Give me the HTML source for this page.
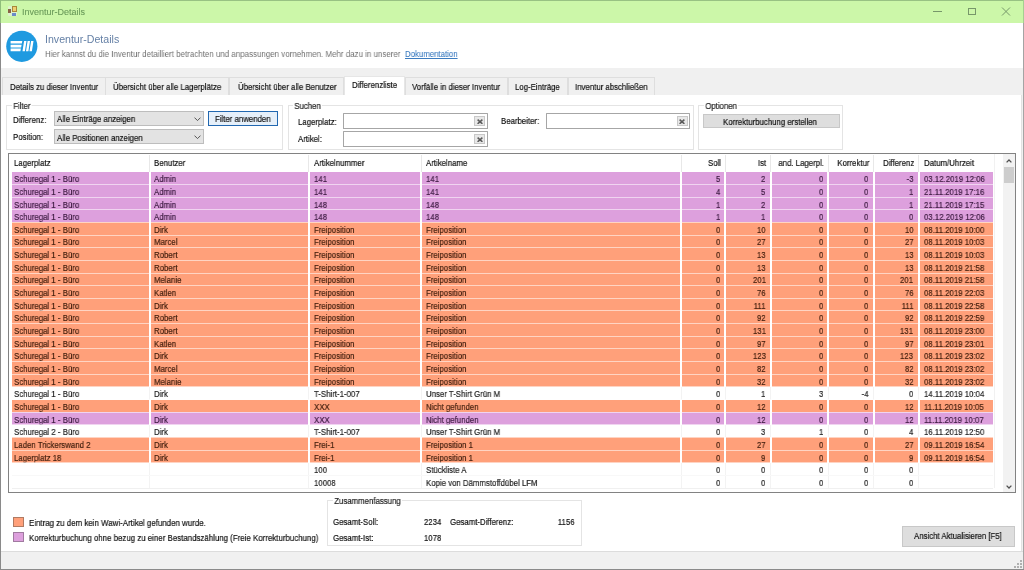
<!DOCTYPE html>
<html><head><meta charset="utf-8"><style>
*{margin:0;padding:0;box-sizing:border-box}
html,body{width:1024px;height:570px;overflow:hidden;background:#f0f0f0;font-family:"Liberation Sans", sans-serif;font-size:7.8px;color:#111;position:relative}
div{position:absolute}
.t{will-change:transform;-webkit-text-stroke:0.2px currentColor;white-space:nowrap;line-height:9px;font-size:9.6px;transform:scaleX(0.815);transform-origin:0 0}
.r{text-align:right;transform-origin:100% 0}
.cell{}
.hsep{top:155px;width:1px;height:16.5px;background:#e8e8e8}
.rsep{left:12px;width:982px;height:1px;background:rgba(255,255,255,0.55);z-index:1}
.vsep{width:2px;background:#fff}
.wsep{top:171.8px;height:316px;width:1px;background:#f3f3f3}
.gb{border:1px solid #e4e4e4}
.gbl{-webkit-text-stroke:0.2px #222;background:#fff;padding:0 1.5px;top:-5px;left:4.5px;white-space:nowrap;line-height:10px;color:#222;font-size:9.6px;transform:scaleX(0.815);transform-origin:0 0;will-change:transform}
.combo{background:#e3e3e3;border:1px solid #bdbdbd}
.tb{background:#fff;border:1.5px solid #a6a6a6;border-radius:0.5px}
.xb{background:#e8e8e8;border:1px solid #c8c8c8;width:11px;height:9.5px}
.btn{background:#dedede;border:1px solid #c8c8c8}
.tab{top:77px;height:18.8px;background:#f0f0f0;border:1px solid #dedede;border-bottom:none}
#wrap{left:0;top:0;width:1024px;height:570px;filter:blur(0.45px)}
</style></head><body><div id="wrap">
<!-- window frame -->
<div style="left:0;top:0;width:1024px;height:22.5px;background:#ccf7a9"></div>
<div style="left:0;top:0;width:1024px;height:1px;background:#98c283"></div>
<div style="left:0;top:0;width:1px;height:22.5px;background:#8fbd7b"></div>
<div style="left:1023px;top:0;width:1px;height:22.5px;background:#a5cf90"></div>
<!-- app icon -->
<div style="left:7.5px;top:6px;width:9.5px;height:10px;background:#dcf3cc;border-radius:1px"></div>
<div style="left:8px;top:8.8px;width:3.3px;height:4.6px;background:#8a6446"></div>
<div style="left:11.9px;top:6.4px;width:4.9px;height:5.3px;background:#f0d072;border:1px solid #a8883a"></div>
<div style="left:11.9px;top:13px;width:4.3px;height:2.8px;background:#6a8cc8"></div>
<div class="t" style="left:22.2px;top:7px;font-size:9px;line-height:10px;color:#6a9a5a;transform:none;-webkit-text-stroke:0.1px #6a9a5a">Inventur-Details</div>
<!-- caption buttons -->
<div style="left:933px;top:11px;width:9px;height:1px;background:#77976a"></div>
<div style="left:968px;top:7.5px;width:8px;height:7.5px;border:1px solid #77976a"></div>
<svg style="position:absolute;left:1001px;top:7px" width="10" height="9" viewBox="0 0 10 9"><path d="M1 0.5 L9 8.5 M9 0.5 L1 8.5" stroke="#77976a" stroke-width="1" fill="none"/></svg>

<!-- body frame borders -->
<div style="left:0;top:22.5px;width:1px;height:548px;background:#8a8a8a"></div>
<div style="left:1023px;top:22.5px;width:1px;height:548px;background:#a4a4a4"></div>
<div style="left:0;top:569px;width:1024px;height:1px;background:#8a8a8a"></div>

<!-- header white -->
<div style="left:1px;top:22.5px;width:1022px;height:45.5px;background:#fff"></div>
<svg style="position:absolute;left:0;top:0" width="50" height="70" viewBox="0 0 50 70">
<circle cx="21.8" cy="46.3" r="15.6" fill="#1f9ae0"/>
<path d="M10.6 40.9 H22.3 L21.8 43.6 H10.6 Z M10.6 44.7 H21.6 L21.1 47.4 H10.6 Z M10.6 48.5 H20.9 L20.4 51.2 H10.6 Z" fill="#fff"/>
<path d="M24.1 40.9 H26.5 L24.9 51.2 H22.5 Z M27.6 40.9 H30.0 L28.4 51.2 H26.0 Z M31.1 40.9 H33.5 L31.9 51.2 H29.5 Z" fill="#fff"/>
</svg>
<div class="t" style="left:45.2px;top:32.6px;font-size:10.6px;line-height:12px;color:#6580a6;transform:none;-webkit-text-stroke:0">Inventur-Details</div>
<div class="t" style="left:45.2px;top:48.6px;color:#707070;-webkit-text-stroke:0;transform:scaleX(0.828)">Hier kannst du die Inventur detailliert betrachten und anpassungen vornehmen. Mehr dazu in unserer</div>
<div class="t" style="left:404.6px;top:48.6px;color:#3c7cc0;-webkit-text-stroke:0.1px #3c7cc0;text-decoration:underline">Dokumentation</div>

<!-- tabs -->
<div class="tab" style="left:1.8px;width:103.8px"></div>
<div class="tab" style="left:105.4px;width:123.6px"></div>
<div class="tab" style="left:229px;width:115px"></div>
<div class="tab" style="left:405.2px;width:102.4px"></div>
<div class="tab" style="left:507.6px;width:60.5px"></div>
<div class="tab" style="left:568.1px;width:87px"></div>
<div style="left:343.7px;top:75.8px;width:61.5px;height:20.5px;background:#fff;border:1px solid #e6e6e6;border-bottom:none"></div>
<div class="t" style="left:10px;top:82.0px">Details zu dieser Inventur</div>
<div class="t" style="left:113.4px;top:82.0px">Übersicht über alle Lagerplätze</div>
<div class="t" style="left:238px;top:82.0px">Übersicht über alle Benutzer</div>
<div class="t" style="left:351.9px;top:80.2px">Differenzliste</div>
<div class="t" style="left:411.6px;top:82.0px">Vorfälle in dieser Inventur</div>
<div class="t" style="left:515.4px;top:82.0px">Log-Einträge</div>
<div class="t" style="left:575.4px;top:82.0px">Inventur abschließen</div>

<!-- tab page -->
<div style="left:1px;top:95.4px;width:1021px;height:456.5px;background:#fff;border:1px solid #e2e2e2;border-top:none;border-left:none"></div>

<!-- Filter group -->
<div class="gb" style="left:6.2px;top:105.3px;width:276.4px;height:44.5px"><div class="gbl">Filter</div></div>
<div class="t" style="left:12.7px;top:114.5px">Differenz:</div>
<div class="t" style="left:12.7px;top:132.2px">Position:</div>
<div class="combo" style="left:53.7px;top:110.6px;width:150.5px;height:15.3px"></div>
<div class="combo" style="left:53.7px;top:129.2px;width:150.5px;height:15.2px"></div>
<div class="t" style="left:57.1px;top:113.8px">Alle Einträge anzeigen</div>
<div class="t" style="left:57.1px;top:132.8px">Alle Positionen anzeigen</div>
<svg style="position:absolute;left:194.2px;top:116.5px" width="7" height="4.5" viewBox="0 0 7 4.5"><path d="M0.5 0.6 L3.5 3.6 L6.5 0.6" stroke="#555" stroke-width="1" fill="none"/></svg>
<svg style="position:absolute;left:194.2px;top:135px" width="7" height="4.5" viewBox="0 0 7 4.5"><path d="M0.5 0.6 L3.5 3.6 L6.5 0.6" stroke="#555" stroke-width="1" fill="none"/></svg>
<div style="left:207.9px;top:110.5px;width:70px;height:15.3px;background:#e6f0fa;border:1.5px solid #2167b0"></div>
<div class="t" style="left:214.6px;top:113.7px">Filter anwenden</div>

<!-- Suchen group -->
<div class="gb" style="left:287.6px;top:105.3px;width:406px;height:44.5px"><div class="gbl">Suchen</div></div>
<div class="t" style="left:297.6px;top:116.5px">Lagerplatz:</div>
<div class="t" style="left:297.6px;top:134px">Artikel:</div>
<div class="t" style="left:501px;top:116px">Bearbeiter:</div>
<div class="tb" style="left:343.3px;top:113px;width:145px;height:15.6px"></div>
<div class="tb" style="left:343.3px;top:131px;width:145px;height:15.7px"></div>
<div class="tb" style="left:546.1px;top:113px;width:143.7px;height:15.6px"></div>
<div class="xb" style="left:474.3px;top:116.4px"></div><svg style="position:absolute;left:476.90000000000003px;top:118.60000000000001px" width="6" height="5.5" viewBox="0 0 6 5.5"><path d="M0.6 0.6 L5.4 4.9 M5.4 0.6 L0.6 4.9" stroke="#5a5a5a" stroke-width="1.5" fill="none"/></svg><div class="xb" style="left:474.3px;top:134.3px"></div><svg style="position:absolute;left:476.90000000000003px;top:136.5px" width="6" height="5.5" viewBox="0 0 6 5.5"><path d="M0.6 0.6 L5.4 4.9 M5.4 0.6 L0.6 4.9" stroke="#5a5a5a" stroke-width="1.5" fill="none"/></svg><div class="xb" style="left:676.8px;top:116.4px"></div><svg style="position:absolute;left:679.4px;top:118.60000000000001px" width="6" height="5.5" viewBox="0 0 6 5.5"><path d="M0.6 0.6 L5.4 4.9 M5.4 0.6 L0.6 4.9" stroke="#5a5a5a" stroke-width="1.5" fill="none"/></svg>

<!-- Optionen group -->
<div class="gb" style="left:698.3px;top:105.3px;width:145px;height:44.5px"><div class="gbl">Optionen</div></div>
<div class="btn" style="left:703.3px;top:113.5px;width:136.4px;height:14.9px"></div>
<div class="t" style="left:723px;top:117px">Korrekturbuchung erstellen</div>

<!-- Grid -->
<div style="left:8px;top:153.4px;width:1008px;height:339.4px;background:#fff;border:1px solid #828282"></div>
<div class="wsep" style="left:149.0px"></div><div class="wsep" style="left:308.2px"></div><div class="wsep" style="left:420.5px"></div><div class="wsep" style="left:680.6px"></div><div class="wsep" style="left:724.9px"></div><div class="wsep" style="left:770.4px"></div><div class="wsep" style="left:827.9px"></div><div class="wsep" style="left:873.3px"></div><div class="wsep" style="left:918.2px"></div><div style="left:994px;top:154.4px;width:1px;height:334px;background:#f1f1f1"></div><div class="t" style="left:13.80px;top:158.20px">Lagerplatz</div><div class="t" style="left:154.40px;top:158.20px">Benutzer</div><div class="t" style="left:313.60px;top:158.20px">Artikelnummer</div><div class="t" style="left:425.90px;top:158.20px">Artikelname</div><div class="t r" style="right:303.40px;top:158.20px">Soll</div><div class="t r" style="right:257.90px;top:158.20px">Ist</div><div class="t r" style="right:200.40px;top:158.20px">and. Lagerpl.</div><div class="t r" style="right:155.00px;top:158.20px">Korrektur</div><div class="t r" style="right:110.10px;top:158.20px">Differenz</div><div class="t" style="left:923.60px;top:158.20px">Datum/Uhrzeit</div><div class="hsep" style="left:149.0px"></div><div class="hsep" style="left:308.2px"></div><div class="hsep" style="left:420.5px"></div><div class="hsep" style="left:680.6px"></div><div class="hsep" style="left:724.9px"></div><div class="hsep" style="left:770.4px"></div><div class="hsep" style="left:827.9px"></div><div class="hsep" style="left:873.3px"></div><div class="hsep" style="left:918.2px"></div><div style="left:12px;top:171.80px;width:980.8px;height:12.65px;background:#dda0dd"></div><div class="vsep" style="left:148.5px;top:171.80px;height:12.65px"></div><div class="vsep" style="left:307.7px;top:171.80px;height:12.65px"></div><div class="vsep" style="left:420.0px;top:171.80px;height:12.65px"></div><div class="vsep" style="left:680.1px;top:171.80px;height:12.65px"></div><div class="vsep" style="left:724.4px;top:171.80px;height:12.65px"></div><div class="vsep" style="left:769.9px;top:171.80px;height:12.65px"></div><div class="vsep" style="left:827.4px;top:171.80px;height:12.65px"></div><div class="vsep" style="left:872.8px;top:171.80px;height:12.65px"></div><div class="vsep" style="left:917.7px;top:171.80px;height:12.65px"></div><div class="t" style="left:13.80px;top:174.20px;color:#3c1a40">Schuregal 1 - Büro</div><div class="t" style="left:154.40px;top:174.20px;color:#3c1a40">Admin</div><div class="t" style="left:313.60px;top:174.20px;color:#3c1a40">141</div><div class="t" style="left:425.90px;top:174.20px;color:#3c1a40">141</div><div class="t r" style="right:303.90px;top:174.20px;color:#3c1a40">5</div><div class="t r" style="right:258.40px;top:174.20px;color:#3c1a40">2</div><div class="t r" style="right:200.90px;top:174.20px;color:#3c1a40">0</div><div class="t r" style="right:155.50px;top:174.20px;color:#3c1a40">0</div><div class="t r" style="right:110.60px;top:174.20px;color:#3c1a40">-3</div><div class="t" style="left:923.60px;top:174.20px;color:#3c1a40">03.12.2019 12:06</div><div style="left:12px;top:184.45px;width:980.8px;height:12.65px;background:#dda0dd"></div><div class="vsep" style="left:148.5px;top:184.45px;height:12.65px"></div><div class="vsep" style="left:307.7px;top:184.45px;height:12.65px"></div><div class="vsep" style="left:420.0px;top:184.45px;height:12.65px"></div><div class="vsep" style="left:680.1px;top:184.45px;height:12.65px"></div><div class="vsep" style="left:724.4px;top:184.45px;height:12.65px"></div><div class="vsep" style="left:769.9px;top:184.45px;height:12.65px"></div><div class="vsep" style="left:827.4px;top:184.45px;height:12.65px"></div><div class="vsep" style="left:872.8px;top:184.45px;height:12.65px"></div><div class="vsep" style="left:917.7px;top:184.45px;height:12.65px"></div><div class="rsep" style="top:183.95px"></div><div class="t" style="left:13.80px;top:186.85px;color:#3c1a40">Schuregal 1 - Büro</div><div class="t" style="left:154.40px;top:186.85px;color:#3c1a40">Admin</div><div class="t" style="left:313.60px;top:186.85px;color:#3c1a40">141</div><div class="t" style="left:425.90px;top:186.85px;color:#3c1a40">141</div><div class="t r" style="right:303.90px;top:186.85px;color:#3c1a40">4</div><div class="t r" style="right:258.40px;top:186.85px;color:#3c1a40">5</div><div class="t r" style="right:200.90px;top:186.85px;color:#3c1a40">0</div><div class="t r" style="right:155.50px;top:186.85px;color:#3c1a40">0</div><div class="t r" style="right:110.60px;top:186.85px;color:#3c1a40">1</div><div class="t" style="left:923.60px;top:186.85px;color:#3c1a40">21.11.2019 17:16</div><div style="left:12px;top:197.10px;width:980.8px;height:12.65px;background:#dda0dd"></div><div class="vsep" style="left:148.5px;top:197.10px;height:12.65px"></div><div class="vsep" style="left:307.7px;top:197.10px;height:12.65px"></div><div class="vsep" style="left:420.0px;top:197.10px;height:12.65px"></div><div class="vsep" style="left:680.1px;top:197.10px;height:12.65px"></div><div class="vsep" style="left:724.4px;top:197.10px;height:12.65px"></div><div class="vsep" style="left:769.9px;top:197.10px;height:12.65px"></div><div class="vsep" style="left:827.4px;top:197.10px;height:12.65px"></div><div class="vsep" style="left:872.8px;top:197.10px;height:12.65px"></div><div class="vsep" style="left:917.7px;top:197.10px;height:12.65px"></div><div class="rsep" style="top:196.60px"></div><div class="t" style="left:13.80px;top:199.50px;color:#3c1a40">Schuregal 1 - Büro</div><div class="t" style="left:154.40px;top:199.50px;color:#3c1a40">Admin</div><div class="t" style="left:313.60px;top:199.50px;color:#3c1a40">148</div><div class="t" style="left:425.90px;top:199.50px;color:#3c1a40">148</div><div class="t r" style="right:303.90px;top:199.50px;color:#3c1a40">1</div><div class="t r" style="right:258.40px;top:199.50px;color:#3c1a40">2</div><div class="t r" style="right:200.90px;top:199.50px;color:#3c1a40">0</div><div class="t r" style="right:155.50px;top:199.50px;color:#3c1a40">0</div><div class="t r" style="right:110.60px;top:199.50px;color:#3c1a40">1</div><div class="t" style="left:923.60px;top:199.50px;color:#3c1a40">21.11.2019 17:15</div><div style="left:12px;top:209.75px;width:980.8px;height:12.65px;background:#dda0dd"></div><div class="vsep" style="left:148.5px;top:209.75px;height:12.65px"></div><div class="vsep" style="left:307.7px;top:209.75px;height:12.65px"></div><div class="vsep" style="left:420.0px;top:209.75px;height:12.65px"></div><div class="vsep" style="left:680.1px;top:209.75px;height:12.65px"></div><div class="vsep" style="left:724.4px;top:209.75px;height:12.65px"></div><div class="vsep" style="left:769.9px;top:209.75px;height:12.65px"></div><div class="vsep" style="left:827.4px;top:209.75px;height:12.65px"></div><div class="vsep" style="left:872.8px;top:209.75px;height:12.65px"></div><div class="vsep" style="left:917.7px;top:209.75px;height:12.65px"></div><div class="rsep" style="top:209.25px"></div><div class="t" style="left:13.80px;top:212.15px;color:#3c1a40">Schuregal 1 - Büro</div><div class="t" style="left:154.40px;top:212.15px;color:#3c1a40">Admin</div><div class="t" style="left:313.60px;top:212.15px;color:#3c1a40">148</div><div class="t" style="left:425.90px;top:212.15px;color:#3c1a40">148</div><div class="t r" style="right:303.90px;top:212.15px;color:#3c1a40">1</div><div class="t r" style="right:258.40px;top:212.15px;color:#3c1a40">1</div><div class="t r" style="right:200.90px;top:212.15px;color:#3c1a40">0</div><div class="t r" style="right:155.50px;top:212.15px;color:#3c1a40">0</div><div class="t r" style="right:110.60px;top:212.15px;color:#3c1a40">0</div><div class="t" style="left:923.60px;top:212.15px;color:#3c1a40">03.12.2019 12:06</div><div style="left:12px;top:222.40px;width:980.8px;height:12.65px;background:#ffa07a"></div><div class="vsep" style="left:148.5px;top:222.40px;height:12.65px"></div><div class="vsep" style="left:307.7px;top:222.40px;height:12.65px"></div><div class="vsep" style="left:420.0px;top:222.40px;height:12.65px"></div><div class="vsep" style="left:680.1px;top:222.40px;height:12.65px"></div><div class="vsep" style="left:724.4px;top:222.40px;height:12.65px"></div><div class="vsep" style="left:769.9px;top:222.40px;height:12.65px"></div><div class="vsep" style="left:827.4px;top:222.40px;height:12.65px"></div><div class="vsep" style="left:872.8px;top:222.40px;height:12.65px"></div><div class="vsep" style="left:917.7px;top:222.40px;height:12.65px"></div><div class="rsep" style="top:221.90px"></div><div class="t" style="left:13.80px;top:224.80px;color:#44200f">Schuregal 1 - Büro</div><div class="t" style="left:154.40px;top:224.80px;color:#44200f">Dirk</div><div class="t" style="left:313.60px;top:224.80px;color:#44200f">Freiposition</div><div class="t" style="left:425.90px;top:224.80px;color:#44200f">Freiposition</div><div class="t r" style="right:303.90px;top:224.80px;color:#44200f">0</div><div class="t r" style="right:258.40px;top:224.80px;color:#44200f">10</div><div class="t r" style="right:200.90px;top:224.80px;color:#44200f">0</div><div class="t r" style="right:155.50px;top:224.80px;color:#44200f">0</div><div class="t r" style="right:110.60px;top:224.80px;color:#44200f">10</div><div class="t" style="left:923.60px;top:224.80px;color:#44200f">08.11.2019 10:00</div><div style="left:12px;top:235.05px;width:980.8px;height:12.65px;background:#ffa07a"></div><div class="vsep" style="left:148.5px;top:235.05px;height:12.65px"></div><div class="vsep" style="left:307.7px;top:235.05px;height:12.65px"></div><div class="vsep" style="left:420.0px;top:235.05px;height:12.65px"></div><div class="vsep" style="left:680.1px;top:235.05px;height:12.65px"></div><div class="vsep" style="left:724.4px;top:235.05px;height:12.65px"></div><div class="vsep" style="left:769.9px;top:235.05px;height:12.65px"></div><div class="vsep" style="left:827.4px;top:235.05px;height:12.65px"></div><div class="vsep" style="left:872.8px;top:235.05px;height:12.65px"></div><div class="vsep" style="left:917.7px;top:235.05px;height:12.65px"></div><div class="rsep" style="top:234.55px"></div><div class="t" style="left:13.80px;top:237.45px;color:#44200f">Schuregal 1 - Büro</div><div class="t" style="left:154.40px;top:237.45px;color:#44200f">Marcel</div><div class="t" style="left:313.60px;top:237.45px;color:#44200f">Freiposition</div><div class="t" style="left:425.90px;top:237.45px;color:#44200f">Freiposition</div><div class="t r" style="right:303.90px;top:237.45px;color:#44200f">0</div><div class="t r" style="right:258.40px;top:237.45px;color:#44200f">27</div><div class="t r" style="right:200.90px;top:237.45px;color:#44200f">0</div><div class="t r" style="right:155.50px;top:237.45px;color:#44200f">0</div><div class="t r" style="right:110.60px;top:237.45px;color:#44200f">27</div><div class="t" style="left:923.60px;top:237.45px;color:#44200f">08.11.2019 10:03</div><div style="left:12px;top:247.70px;width:980.8px;height:12.65px;background:#ffa07a"></div><div class="vsep" style="left:148.5px;top:247.70px;height:12.65px"></div><div class="vsep" style="left:307.7px;top:247.70px;height:12.65px"></div><div class="vsep" style="left:420.0px;top:247.70px;height:12.65px"></div><div class="vsep" style="left:680.1px;top:247.70px;height:12.65px"></div><div class="vsep" style="left:724.4px;top:247.70px;height:12.65px"></div><div class="vsep" style="left:769.9px;top:247.70px;height:12.65px"></div><div class="vsep" style="left:827.4px;top:247.70px;height:12.65px"></div><div class="vsep" style="left:872.8px;top:247.70px;height:12.65px"></div><div class="vsep" style="left:917.7px;top:247.70px;height:12.65px"></div><div class="rsep" style="top:247.20px"></div><div class="t" style="left:13.80px;top:250.10px;color:#44200f">Schuregal 1 - Büro</div><div class="t" style="left:154.40px;top:250.10px;color:#44200f">Robert</div><div class="t" style="left:313.60px;top:250.10px;color:#44200f">Freiposition</div><div class="t" style="left:425.90px;top:250.10px;color:#44200f">Freiposition</div><div class="t r" style="right:303.90px;top:250.10px;color:#44200f">0</div><div class="t r" style="right:258.40px;top:250.10px;color:#44200f">13</div><div class="t r" style="right:200.90px;top:250.10px;color:#44200f">0</div><div class="t r" style="right:155.50px;top:250.10px;color:#44200f">0</div><div class="t r" style="right:110.60px;top:250.10px;color:#44200f">13</div><div class="t" style="left:923.60px;top:250.10px;color:#44200f">08.11.2019 10:03</div><div style="left:12px;top:260.35px;width:980.8px;height:12.65px;background:#ffa07a"></div><div class="vsep" style="left:148.5px;top:260.35px;height:12.65px"></div><div class="vsep" style="left:307.7px;top:260.35px;height:12.65px"></div><div class="vsep" style="left:420.0px;top:260.35px;height:12.65px"></div><div class="vsep" style="left:680.1px;top:260.35px;height:12.65px"></div><div class="vsep" style="left:724.4px;top:260.35px;height:12.65px"></div><div class="vsep" style="left:769.9px;top:260.35px;height:12.65px"></div><div class="vsep" style="left:827.4px;top:260.35px;height:12.65px"></div><div class="vsep" style="left:872.8px;top:260.35px;height:12.65px"></div><div class="vsep" style="left:917.7px;top:260.35px;height:12.65px"></div><div class="rsep" style="top:259.85px"></div><div class="t" style="left:13.80px;top:262.75px;color:#44200f">Schuregal 1 - Büro</div><div class="t" style="left:154.40px;top:262.75px;color:#44200f">Robert</div><div class="t" style="left:313.60px;top:262.75px;color:#44200f">Freiposition</div><div class="t" style="left:425.90px;top:262.75px;color:#44200f">Freiposition</div><div class="t r" style="right:303.90px;top:262.75px;color:#44200f">0</div><div class="t r" style="right:258.40px;top:262.75px;color:#44200f">13</div><div class="t r" style="right:200.90px;top:262.75px;color:#44200f">0</div><div class="t r" style="right:155.50px;top:262.75px;color:#44200f">0</div><div class="t r" style="right:110.60px;top:262.75px;color:#44200f">13</div><div class="t" style="left:923.60px;top:262.75px;color:#44200f">08.11.2019 21:58</div><div style="left:12px;top:273.00px;width:980.8px;height:12.65px;background:#ffa07a"></div><div class="vsep" style="left:148.5px;top:273.00px;height:12.65px"></div><div class="vsep" style="left:307.7px;top:273.00px;height:12.65px"></div><div class="vsep" style="left:420.0px;top:273.00px;height:12.65px"></div><div class="vsep" style="left:680.1px;top:273.00px;height:12.65px"></div><div class="vsep" style="left:724.4px;top:273.00px;height:12.65px"></div><div class="vsep" style="left:769.9px;top:273.00px;height:12.65px"></div><div class="vsep" style="left:827.4px;top:273.00px;height:12.65px"></div><div class="vsep" style="left:872.8px;top:273.00px;height:12.65px"></div><div class="vsep" style="left:917.7px;top:273.00px;height:12.65px"></div><div class="rsep" style="top:272.50px"></div><div class="t" style="left:13.80px;top:275.40px;color:#44200f">Schuregal 1 - Büro</div><div class="t" style="left:154.40px;top:275.40px;color:#44200f">Melanie</div><div class="t" style="left:313.60px;top:275.40px;color:#44200f">Freiposition</div><div class="t" style="left:425.90px;top:275.40px;color:#44200f">Freiposition</div><div class="t r" style="right:303.90px;top:275.40px;color:#44200f">0</div><div class="t r" style="right:258.40px;top:275.40px;color:#44200f">201</div><div class="t r" style="right:200.90px;top:275.40px;color:#44200f">0</div><div class="t r" style="right:155.50px;top:275.40px;color:#44200f">0</div><div class="t r" style="right:110.60px;top:275.40px;color:#44200f">201</div><div class="t" style="left:923.60px;top:275.40px;color:#44200f">08.11.2019 21:58</div><div style="left:12px;top:285.65px;width:980.8px;height:12.65px;background:#ffa07a"></div><div class="vsep" style="left:148.5px;top:285.65px;height:12.65px"></div><div class="vsep" style="left:307.7px;top:285.65px;height:12.65px"></div><div class="vsep" style="left:420.0px;top:285.65px;height:12.65px"></div><div class="vsep" style="left:680.1px;top:285.65px;height:12.65px"></div><div class="vsep" style="left:724.4px;top:285.65px;height:12.65px"></div><div class="vsep" style="left:769.9px;top:285.65px;height:12.65px"></div><div class="vsep" style="left:827.4px;top:285.65px;height:12.65px"></div><div class="vsep" style="left:872.8px;top:285.65px;height:12.65px"></div><div class="vsep" style="left:917.7px;top:285.65px;height:12.65px"></div><div class="rsep" style="top:285.15px"></div><div class="t" style="left:13.80px;top:288.05px;color:#44200f">Schuregal 1 - Büro</div><div class="t" style="left:154.40px;top:288.05px;color:#44200f">Katlen</div><div class="t" style="left:313.60px;top:288.05px;color:#44200f">Freiposition</div><div class="t" style="left:425.90px;top:288.05px;color:#44200f">Freiposition</div><div class="t r" style="right:303.90px;top:288.05px;color:#44200f">0</div><div class="t r" style="right:258.40px;top:288.05px;color:#44200f">76</div><div class="t r" style="right:200.90px;top:288.05px;color:#44200f">0</div><div class="t r" style="right:155.50px;top:288.05px;color:#44200f">0</div><div class="t r" style="right:110.60px;top:288.05px;color:#44200f">76</div><div class="t" style="left:923.60px;top:288.05px;color:#44200f">08.11.2019 22:03</div><div style="left:12px;top:298.30px;width:980.8px;height:12.65px;background:#ffa07a"></div><div class="vsep" style="left:148.5px;top:298.30px;height:12.65px"></div><div class="vsep" style="left:307.7px;top:298.30px;height:12.65px"></div><div class="vsep" style="left:420.0px;top:298.30px;height:12.65px"></div><div class="vsep" style="left:680.1px;top:298.30px;height:12.65px"></div><div class="vsep" style="left:724.4px;top:298.30px;height:12.65px"></div><div class="vsep" style="left:769.9px;top:298.30px;height:12.65px"></div><div class="vsep" style="left:827.4px;top:298.30px;height:12.65px"></div><div class="vsep" style="left:872.8px;top:298.30px;height:12.65px"></div><div class="vsep" style="left:917.7px;top:298.30px;height:12.65px"></div><div class="rsep" style="top:297.80px"></div><div class="t" style="left:13.80px;top:300.70px;color:#44200f">Schuregal 1 - Büro</div><div class="t" style="left:154.40px;top:300.70px;color:#44200f">Dirk</div><div class="t" style="left:313.60px;top:300.70px;color:#44200f">Freiposition</div><div class="t" style="left:425.90px;top:300.70px;color:#44200f">Freiposition</div><div class="t r" style="right:303.90px;top:300.70px;color:#44200f">0</div><div class="t r" style="right:258.40px;top:300.70px;color:#44200f">111</div><div class="t r" style="right:200.90px;top:300.70px;color:#44200f">0</div><div class="t r" style="right:155.50px;top:300.70px;color:#44200f">0</div><div class="t r" style="right:110.60px;top:300.70px;color:#44200f">111</div><div class="t" style="left:923.60px;top:300.70px;color:#44200f">08.11.2019 22:58</div><div style="left:12px;top:310.95px;width:980.8px;height:12.65px;background:#ffa07a"></div><div class="vsep" style="left:148.5px;top:310.95px;height:12.65px"></div><div class="vsep" style="left:307.7px;top:310.95px;height:12.65px"></div><div class="vsep" style="left:420.0px;top:310.95px;height:12.65px"></div><div class="vsep" style="left:680.1px;top:310.95px;height:12.65px"></div><div class="vsep" style="left:724.4px;top:310.95px;height:12.65px"></div><div class="vsep" style="left:769.9px;top:310.95px;height:12.65px"></div><div class="vsep" style="left:827.4px;top:310.95px;height:12.65px"></div><div class="vsep" style="left:872.8px;top:310.95px;height:12.65px"></div><div class="vsep" style="left:917.7px;top:310.95px;height:12.65px"></div><div class="rsep" style="top:310.45px"></div><div class="t" style="left:13.80px;top:313.35px;color:#44200f">Schuregal 1 - Büro</div><div class="t" style="left:154.40px;top:313.35px;color:#44200f">Robert</div><div class="t" style="left:313.60px;top:313.35px;color:#44200f">Freiposition</div><div class="t" style="left:425.90px;top:313.35px;color:#44200f">Freiposition</div><div class="t r" style="right:303.90px;top:313.35px;color:#44200f">0</div><div class="t r" style="right:258.40px;top:313.35px;color:#44200f">92</div><div class="t r" style="right:200.90px;top:313.35px;color:#44200f">0</div><div class="t r" style="right:155.50px;top:313.35px;color:#44200f">0</div><div class="t r" style="right:110.60px;top:313.35px;color:#44200f">92</div><div class="t" style="left:923.60px;top:313.35px;color:#44200f">08.11.2019 22:59</div><div style="left:12px;top:323.60px;width:980.8px;height:12.65px;background:#ffa07a"></div><div class="vsep" style="left:148.5px;top:323.60px;height:12.65px"></div><div class="vsep" style="left:307.7px;top:323.60px;height:12.65px"></div><div class="vsep" style="left:420.0px;top:323.60px;height:12.65px"></div><div class="vsep" style="left:680.1px;top:323.60px;height:12.65px"></div><div class="vsep" style="left:724.4px;top:323.60px;height:12.65px"></div><div class="vsep" style="left:769.9px;top:323.60px;height:12.65px"></div><div class="vsep" style="left:827.4px;top:323.60px;height:12.65px"></div><div class="vsep" style="left:872.8px;top:323.60px;height:12.65px"></div><div class="vsep" style="left:917.7px;top:323.60px;height:12.65px"></div><div class="rsep" style="top:323.10px"></div><div class="t" style="left:13.80px;top:326.00px;color:#44200f">Schuregal 1 - Büro</div><div class="t" style="left:154.40px;top:326.00px;color:#44200f">Robert</div><div class="t" style="left:313.60px;top:326.00px;color:#44200f">Freiposition</div><div class="t" style="left:425.90px;top:326.00px;color:#44200f">Freiposition</div><div class="t r" style="right:303.90px;top:326.00px;color:#44200f">0</div><div class="t r" style="right:258.40px;top:326.00px;color:#44200f">131</div><div class="t r" style="right:200.90px;top:326.00px;color:#44200f">0</div><div class="t r" style="right:155.50px;top:326.00px;color:#44200f">0</div><div class="t r" style="right:110.60px;top:326.00px;color:#44200f">131</div><div class="t" style="left:923.60px;top:326.00px;color:#44200f">08.11.2019 23:00</div><div style="left:12px;top:336.25px;width:980.8px;height:12.65px;background:#ffa07a"></div><div class="vsep" style="left:148.5px;top:336.25px;height:12.65px"></div><div class="vsep" style="left:307.7px;top:336.25px;height:12.65px"></div><div class="vsep" style="left:420.0px;top:336.25px;height:12.65px"></div><div class="vsep" style="left:680.1px;top:336.25px;height:12.65px"></div><div class="vsep" style="left:724.4px;top:336.25px;height:12.65px"></div><div class="vsep" style="left:769.9px;top:336.25px;height:12.65px"></div><div class="vsep" style="left:827.4px;top:336.25px;height:12.65px"></div><div class="vsep" style="left:872.8px;top:336.25px;height:12.65px"></div><div class="vsep" style="left:917.7px;top:336.25px;height:12.65px"></div><div class="rsep" style="top:335.75px"></div><div class="t" style="left:13.80px;top:338.65px;color:#44200f">Schuregal 1 - Büro</div><div class="t" style="left:154.40px;top:338.65px;color:#44200f">Katlen</div><div class="t" style="left:313.60px;top:338.65px;color:#44200f">Freiposition</div><div class="t" style="left:425.90px;top:338.65px;color:#44200f">Freiposition</div><div class="t r" style="right:303.90px;top:338.65px;color:#44200f">0</div><div class="t r" style="right:258.40px;top:338.65px;color:#44200f">97</div><div class="t r" style="right:200.90px;top:338.65px;color:#44200f">0</div><div class="t r" style="right:155.50px;top:338.65px;color:#44200f">0</div><div class="t r" style="right:110.60px;top:338.65px;color:#44200f">97</div><div class="t" style="left:923.60px;top:338.65px;color:#44200f">08.11.2019 23:01</div><div style="left:12px;top:348.90px;width:980.8px;height:12.65px;background:#ffa07a"></div><div class="vsep" style="left:148.5px;top:348.90px;height:12.65px"></div><div class="vsep" style="left:307.7px;top:348.90px;height:12.65px"></div><div class="vsep" style="left:420.0px;top:348.90px;height:12.65px"></div><div class="vsep" style="left:680.1px;top:348.90px;height:12.65px"></div><div class="vsep" style="left:724.4px;top:348.90px;height:12.65px"></div><div class="vsep" style="left:769.9px;top:348.90px;height:12.65px"></div><div class="vsep" style="left:827.4px;top:348.90px;height:12.65px"></div><div class="vsep" style="left:872.8px;top:348.90px;height:12.65px"></div><div class="vsep" style="left:917.7px;top:348.90px;height:12.65px"></div><div class="rsep" style="top:348.40px"></div><div class="t" style="left:13.80px;top:351.30px;color:#44200f">Schuregal 1 - Büro</div><div class="t" style="left:154.40px;top:351.30px;color:#44200f">Dirk</div><div class="t" style="left:313.60px;top:351.30px;color:#44200f">Freiposition</div><div class="t" style="left:425.90px;top:351.30px;color:#44200f">Freiposition</div><div class="t r" style="right:303.90px;top:351.30px;color:#44200f">0</div><div class="t r" style="right:258.40px;top:351.30px;color:#44200f">123</div><div class="t r" style="right:200.90px;top:351.30px;color:#44200f">0</div><div class="t r" style="right:155.50px;top:351.30px;color:#44200f">0</div><div class="t r" style="right:110.60px;top:351.30px;color:#44200f">123</div><div class="t" style="left:923.60px;top:351.30px;color:#44200f">08.11.2019 23:02</div><div style="left:12px;top:361.55px;width:980.8px;height:12.65px;background:#ffa07a"></div><div class="vsep" style="left:148.5px;top:361.55px;height:12.65px"></div><div class="vsep" style="left:307.7px;top:361.55px;height:12.65px"></div><div class="vsep" style="left:420.0px;top:361.55px;height:12.65px"></div><div class="vsep" style="left:680.1px;top:361.55px;height:12.65px"></div><div class="vsep" style="left:724.4px;top:361.55px;height:12.65px"></div><div class="vsep" style="left:769.9px;top:361.55px;height:12.65px"></div><div class="vsep" style="left:827.4px;top:361.55px;height:12.65px"></div><div class="vsep" style="left:872.8px;top:361.55px;height:12.65px"></div><div class="vsep" style="left:917.7px;top:361.55px;height:12.65px"></div><div class="rsep" style="top:361.05px"></div><div class="t" style="left:13.80px;top:363.95px;color:#44200f">Schuregal 1 - Büro</div><div class="t" style="left:154.40px;top:363.95px;color:#44200f">Marcel</div><div class="t" style="left:313.60px;top:363.95px;color:#44200f">Freiposition</div><div class="t" style="left:425.90px;top:363.95px;color:#44200f">Freiposition</div><div class="t r" style="right:303.90px;top:363.95px;color:#44200f">0</div><div class="t r" style="right:258.40px;top:363.95px;color:#44200f">82</div><div class="t r" style="right:200.90px;top:363.95px;color:#44200f">0</div><div class="t r" style="right:155.50px;top:363.95px;color:#44200f">0</div><div class="t r" style="right:110.60px;top:363.95px;color:#44200f">82</div><div class="t" style="left:923.60px;top:363.95px;color:#44200f">08.11.2019 23:02</div><div style="left:12px;top:374.20px;width:980.8px;height:12.65px;background:#ffa07a"></div><div class="vsep" style="left:148.5px;top:374.20px;height:12.65px"></div><div class="vsep" style="left:307.7px;top:374.20px;height:12.65px"></div><div class="vsep" style="left:420.0px;top:374.20px;height:12.65px"></div><div class="vsep" style="left:680.1px;top:374.20px;height:12.65px"></div><div class="vsep" style="left:724.4px;top:374.20px;height:12.65px"></div><div class="vsep" style="left:769.9px;top:374.20px;height:12.65px"></div><div class="vsep" style="left:827.4px;top:374.20px;height:12.65px"></div><div class="vsep" style="left:872.8px;top:374.20px;height:12.65px"></div><div class="vsep" style="left:917.7px;top:374.20px;height:12.65px"></div><div class="rsep" style="top:373.70px"></div><div class="t" style="left:13.80px;top:376.60px;color:#44200f">Schuregal 1 - Büro</div><div class="t" style="left:154.40px;top:376.60px;color:#44200f">Melanie</div><div class="t" style="left:313.60px;top:376.60px;color:#44200f">Freiposition</div><div class="t" style="left:425.90px;top:376.60px;color:#44200f">Freiposition</div><div class="t r" style="right:303.90px;top:376.60px;color:#44200f">0</div><div class="t r" style="right:258.40px;top:376.60px;color:#44200f">32</div><div class="t r" style="right:200.90px;top:376.60px;color:#44200f">0</div><div class="t r" style="right:155.50px;top:376.60px;color:#44200f">0</div><div class="t r" style="right:110.60px;top:376.60px;color:#44200f">32</div><div class="t" style="left:923.60px;top:376.60px;color:#44200f">08.11.2019 23:02</div><div class="rsep" style="top:386.35px"></div><div class="t" style="left:13.80px;top:389.25px;color:#1e1e1e">Schuregal 1 - Büro</div><div class="t" style="left:154.40px;top:389.25px;color:#1e1e1e">Dirk</div><div class="t" style="left:313.60px;top:389.25px;color:#1e1e1e">T-Shirt-1-007</div><div class="t" style="left:425.90px;top:389.25px;color:#1e1e1e">Unser T-Shirt Grün M</div><div class="t r" style="right:303.90px;top:389.25px;color:#1e1e1e">0</div><div class="t r" style="right:258.40px;top:389.25px;color:#1e1e1e">1</div><div class="t r" style="right:200.90px;top:389.25px;color:#1e1e1e">3</div><div class="t r" style="right:155.50px;top:389.25px;color:#1e1e1e">-4</div><div class="t r" style="right:110.60px;top:389.25px;color:#1e1e1e">0</div><div class="t" style="left:923.60px;top:389.25px;color:#1e1e1e">14.11.2019 10:04</div><div style="left:12px;top:399.50px;width:980.8px;height:12.65px;background:#ffa07a"></div><div class="vsep" style="left:148.5px;top:399.50px;height:12.65px"></div><div class="vsep" style="left:307.7px;top:399.50px;height:12.65px"></div><div class="vsep" style="left:420.0px;top:399.50px;height:12.65px"></div><div class="vsep" style="left:680.1px;top:399.50px;height:12.65px"></div><div class="vsep" style="left:724.4px;top:399.50px;height:12.65px"></div><div class="vsep" style="left:769.9px;top:399.50px;height:12.65px"></div><div class="vsep" style="left:827.4px;top:399.50px;height:12.65px"></div><div class="vsep" style="left:872.8px;top:399.50px;height:12.65px"></div><div class="vsep" style="left:917.7px;top:399.50px;height:12.65px"></div><div class="rsep" style="top:399.00px"></div><div class="t" style="left:13.80px;top:401.90px;color:#44200f">Schuregal 1 - Büro</div><div class="t" style="left:154.40px;top:401.90px;color:#44200f">Dirk</div><div class="t" style="left:313.60px;top:401.90px;color:#44200f">XXX</div><div class="t" style="left:425.90px;top:401.90px;color:#44200f">Nicht gefunden</div><div class="t r" style="right:303.90px;top:401.90px;color:#44200f">0</div><div class="t r" style="right:258.40px;top:401.90px;color:#44200f">12</div><div class="t r" style="right:200.90px;top:401.90px;color:#44200f">0</div><div class="t r" style="right:155.50px;top:401.90px;color:#44200f">0</div><div class="t r" style="right:110.60px;top:401.90px;color:#44200f">12</div><div class="t" style="left:923.60px;top:401.90px;color:#44200f">11.11.2019 10:05</div><div style="left:12px;top:412.15px;width:980.8px;height:12.65px;background:#dda0dd"></div><div class="vsep" style="left:148.5px;top:412.15px;height:12.65px"></div><div class="vsep" style="left:307.7px;top:412.15px;height:12.65px"></div><div class="vsep" style="left:420.0px;top:412.15px;height:12.65px"></div><div class="vsep" style="left:680.1px;top:412.15px;height:12.65px"></div><div class="vsep" style="left:724.4px;top:412.15px;height:12.65px"></div><div class="vsep" style="left:769.9px;top:412.15px;height:12.65px"></div><div class="vsep" style="left:827.4px;top:412.15px;height:12.65px"></div><div class="vsep" style="left:872.8px;top:412.15px;height:12.65px"></div><div class="vsep" style="left:917.7px;top:412.15px;height:12.65px"></div><div class="rsep" style="top:411.65px"></div><div class="t" style="left:13.80px;top:414.55px;color:#3c1a40">Schuregal 1 - Büro</div><div class="t" style="left:154.40px;top:414.55px;color:#3c1a40">Dirk</div><div class="t" style="left:313.60px;top:414.55px;color:#3c1a40">XXX</div><div class="t" style="left:425.90px;top:414.55px;color:#3c1a40">Nicht gefunden</div><div class="t r" style="right:303.90px;top:414.55px;color:#3c1a40">0</div><div class="t r" style="right:258.40px;top:414.55px;color:#3c1a40">12</div><div class="t r" style="right:200.90px;top:414.55px;color:#3c1a40">0</div><div class="t r" style="right:155.50px;top:414.55px;color:#3c1a40">0</div><div class="t r" style="right:110.60px;top:414.55px;color:#3c1a40">12</div><div class="t" style="left:923.60px;top:414.55px;color:#3c1a40">11.11.2019 10:07</div><div class="rsep" style="top:424.30px"></div><div class="t" style="left:13.80px;top:427.20px;color:#1e1e1e">Schuregal 2 - Büro</div><div class="t" style="left:154.40px;top:427.20px;color:#1e1e1e">Dirk</div><div class="t" style="left:313.60px;top:427.20px;color:#1e1e1e">T-Shirt-1-007</div><div class="t" style="left:425.90px;top:427.20px;color:#1e1e1e">Unser T-Shirt Grün M</div><div class="t r" style="right:303.90px;top:427.20px;color:#1e1e1e">0</div><div class="t r" style="right:258.40px;top:427.20px;color:#1e1e1e">3</div><div class="t r" style="right:200.90px;top:427.20px;color:#1e1e1e">1</div><div class="t r" style="right:155.50px;top:427.20px;color:#1e1e1e">0</div><div class="t r" style="right:110.60px;top:427.20px;color:#1e1e1e">4</div><div class="t" style="left:923.60px;top:427.20px;color:#1e1e1e">16.11.2019 12:50</div><div style="left:12px;top:437.45px;width:980.8px;height:12.65px;background:#ffa07a"></div><div class="vsep" style="left:148.5px;top:437.45px;height:12.65px"></div><div class="vsep" style="left:307.7px;top:437.45px;height:12.65px"></div><div class="vsep" style="left:420.0px;top:437.45px;height:12.65px"></div><div class="vsep" style="left:680.1px;top:437.45px;height:12.65px"></div><div class="vsep" style="left:724.4px;top:437.45px;height:12.65px"></div><div class="vsep" style="left:769.9px;top:437.45px;height:12.65px"></div><div class="vsep" style="left:827.4px;top:437.45px;height:12.65px"></div><div class="vsep" style="left:872.8px;top:437.45px;height:12.65px"></div><div class="vsep" style="left:917.7px;top:437.45px;height:12.65px"></div><div class="rsep" style="top:436.95px"></div><div class="t" style="left:13.80px;top:439.85px;color:#44200f">Laden Trickerswand 2</div><div class="t" style="left:154.40px;top:439.85px;color:#44200f">Dirk</div><div class="t" style="left:313.60px;top:439.85px;color:#44200f">Frei-1</div><div class="t" style="left:425.90px;top:439.85px;color:#44200f">Freiposition 1</div><div class="t r" style="right:303.90px;top:439.85px;color:#44200f">0</div><div class="t r" style="right:258.40px;top:439.85px;color:#44200f">27</div><div class="t r" style="right:200.90px;top:439.85px;color:#44200f">0</div><div class="t r" style="right:155.50px;top:439.85px;color:#44200f">0</div><div class="t r" style="right:110.60px;top:439.85px;color:#44200f">27</div><div class="t" style="left:923.60px;top:439.85px;color:#44200f">09.11.2019 16:54</div><div style="left:12px;top:450.10px;width:980.8px;height:12.65px;background:#ffa07a"></div><div class="vsep" style="left:148.5px;top:450.10px;height:12.65px"></div><div class="vsep" style="left:307.7px;top:450.10px;height:12.65px"></div><div class="vsep" style="left:420.0px;top:450.10px;height:12.65px"></div><div class="vsep" style="left:680.1px;top:450.10px;height:12.65px"></div><div class="vsep" style="left:724.4px;top:450.10px;height:12.65px"></div><div class="vsep" style="left:769.9px;top:450.10px;height:12.65px"></div><div class="vsep" style="left:827.4px;top:450.10px;height:12.65px"></div><div class="vsep" style="left:872.8px;top:450.10px;height:12.65px"></div><div class="vsep" style="left:917.7px;top:450.10px;height:12.65px"></div><div class="rsep" style="top:449.60px"></div><div class="t" style="left:13.80px;top:452.50px;color:#44200f">Lagerplatz 18</div><div class="t" style="left:154.40px;top:452.50px;color:#44200f">Dirk</div><div class="t" style="left:313.60px;top:452.50px;color:#44200f">Frei-1</div><div class="t" style="left:425.90px;top:452.50px;color:#44200f">Freiposition 1</div><div class="t r" style="right:303.90px;top:452.50px;color:#44200f">0</div><div class="t r" style="right:258.40px;top:452.50px;color:#44200f">9</div><div class="t r" style="right:200.90px;top:452.50px;color:#44200f">0</div><div class="t r" style="right:155.50px;top:452.50px;color:#44200f">0</div><div class="t r" style="right:110.60px;top:452.50px;color:#44200f">9</div><div class="t" style="left:923.60px;top:452.50px;color:#44200f">09.11.2019 16:54</div><div class="rsep" style="top:462.25px"></div><div style="left:12px;top:474.90px;width:980.8px;height:1px;background:#f0f0f0"></div><div class="t" style="left:313.60px;top:465.15px;color:#1e1e1e">100</div><div class="t" style="left:425.90px;top:465.15px;color:#1e1e1e">Stückliste A</div><div class="t r" style="right:303.90px;top:465.15px;color:#1e1e1e">0</div><div class="t r" style="right:258.40px;top:465.15px;color:#1e1e1e">0</div><div class="t r" style="right:200.90px;top:465.15px;color:#1e1e1e">0</div><div class="t r" style="right:155.50px;top:465.15px;color:#1e1e1e">0</div><div class="t r" style="right:110.60px;top:465.15px;color:#1e1e1e">0</div><div class="rsep" style="top:474.90px"></div><div style="left:12px;top:487.55px;width:980.8px;height:1px;background:#f0f0f0"></div><div class="t" style="left:313.60px;top:477.80px;color:#1e1e1e">10008</div><div class="t" style="left:425.90px;top:477.80px;color:#1e1e1e">Kopie von Dämmstoffdübel LFM</div><div class="t r" style="right:303.90px;top:477.80px;color:#1e1e1e">0</div><div class="t r" style="right:258.40px;top:477.80px;color:#1e1e1e">0</div><div class="t r" style="right:200.90px;top:477.80px;color:#1e1e1e">0</div><div class="t r" style="right:155.50px;top:477.80px;color:#1e1e1e">0</div><div class="t r" style="right:110.60px;top:477.80px;color:#1e1e1e">0</div>
<!-- scrollbar -->
<div style="left:1003.3px;top:154.4px;width:11.7px;height:337.6px;background:#f2f2f2"></div>
<svg style="position:absolute;left:1005.9px;top:158.6px" width="6" height="4" viewBox="0 0 6 4"><path d="M0.6 3.4 L3 1 L5.4 3.4" stroke="#505050" stroke-width="1.3" fill="none"/></svg>
<div style="left:1003.8px;top:166.9px;width:10.7px;height:15.7px;background:#cdcdcd"></div>
<svg style="position:absolute;left:1005.9px;top:484.6px" width="6" height="4" viewBox="0 0 6 4"><path d="M0.6 0.6 L3 3 L5.4 0.6" stroke="#505050" stroke-width="1.3" fill="none"/></svg>

<!-- Legend -->
<div style="left:13.3px;top:517.2px;width:10.6px;height:10px;background:#ffa07a;border:1px solid #b07a62"></div>
<div style="left:13.3px;top:532.1px;width:10.6px;height:10.2px;background:#dda0dd;border:1px solid #a07aa0"></div>
<div class="t" style="left:29.4px;top:517.5px;transform:scaleX(0.824)">Eintrag zu dem kein Wawi-Artikel gefunden wurde.</div>
<div class="t" style="left:29.4px;top:532.5px;transform:scaleX(0.822)">Korrekturbuchung ohne bezug zu einer Bestandszählung (Freie Korrekturbuchung)</div>

<!-- Zusammenfassung -->
<div class="gb" style="left:327px;top:500px;width:255px;height:46px"><div class="gbl">Zusammenfassung</div></div>
<div class="t" style="left:333px;top:517.2px">Gesamt-Soll:</div>
<div class="t" style="left:333px;top:533.2px">Gesamt-Ist:</div>
<div class="t r" style="right:583px;top:517.2px">2234</div>
<div class="t r" style="right:583px;top:533.2px">1078</div>
<div class="t" style="left:450px;top:517.2px">Gesamt-Differenz:</div>
<div class="t r" style="right:449px;top:517.2px">1156</div>

<div class="btn" style="left:902px;top:526px;width:113px;height:20.7px"></div>
<div class="t" style="left:913.8px;top:531.2px">Ansicht Aktualisieren [F5]</div>

<!-- status bar -->
<div style="left:1019.5px;top:559.5px;width:2px;height:2px;background:#b0b0b0"></div><div style="left:1016.5px;top:562.5px;width:2px;height:2px;background:#b0b0b0"></div><div style="left:1019.5px;top:562.5px;width:2px;height:2px;background:#b0b0b0"></div><div style="left:1013.5px;top:565.5px;width:2px;height:2px;background:#b0b0b0"></div><div style="left:1016.5px;top:565.5px;width:2px;height:2px;background:#b0b0b0"></div><div style="left:1019.5px;top:565.5px;width:2px;height:2px;background:#b0b0b0"></div>
<div style="left:1px;top:551px;width:1022px;height:1px;background:#dcdcdc"></div>
</div></body></html>
